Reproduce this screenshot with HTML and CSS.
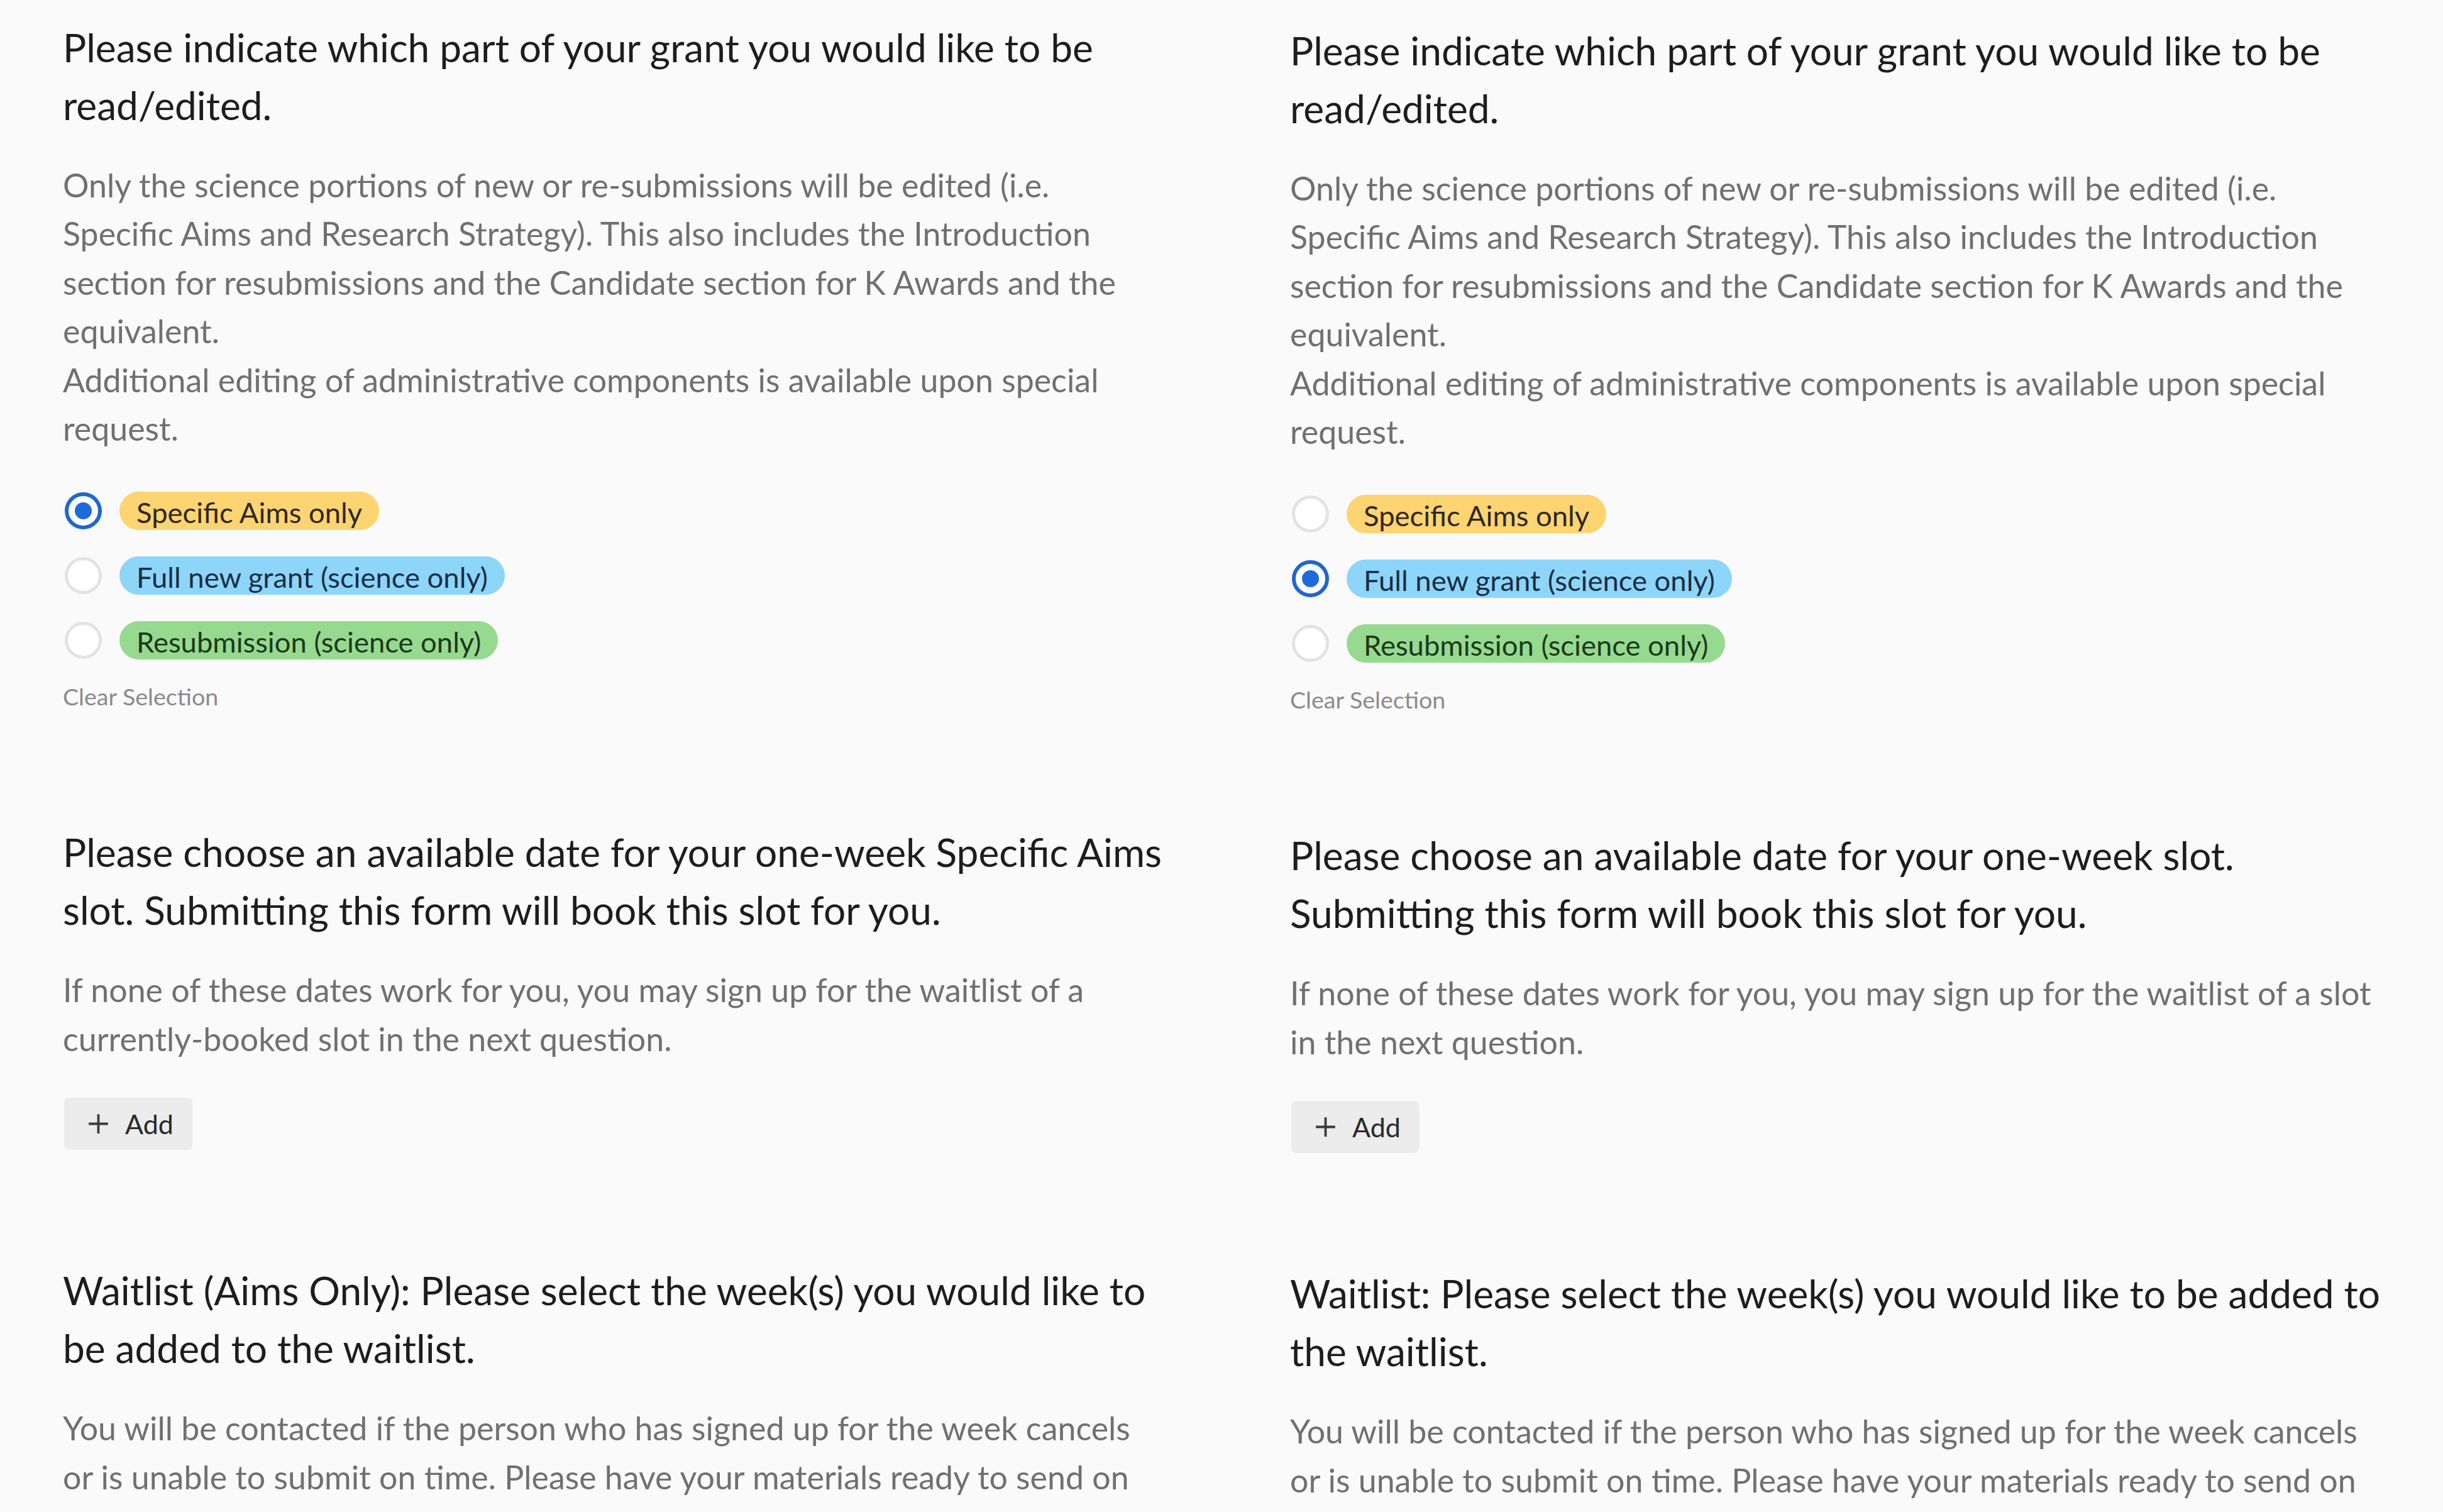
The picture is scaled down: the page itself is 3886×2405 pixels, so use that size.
FILE: index.html
```html
<!DOCTYPE html>
<html lang="en">
<head>
<meta charset="utf-8">
<title>Grant editing form</title>
<link rel="stylesheet" href="styles.css">
</head>
<body>
<main class="page">
  <section class="form-col">
    <div class="question">
      <h2 class="q-title">Please indicate which part of your grant you would like to be read/edited.</h2>
      <p class="q-desc">Only the science portions of new or re-submissions will be edited (i.e. Specific Aims and Research Strategy). This also includes the Introduction section for resubmissions and the Candidate section for K Awards and the equivalent.<br>Additional editing of administrative components is available upon special request.</p>
      <div class="options">
        <div class="option"><span class="radio radio--checked"></span><span class="tag tag--yellow">Specific Aims only</span></div>
        <div class="option"><span class="radio"></span><span class="tag tag--blue">Full new grant (science only)</span></div>
        <div class="option"><span class="radio"></span><span class="tag tag--green">Resubmission (science only)</span></div>
      </div>
      <div class="clear">Clear Selection</div>
    </div>
    <div class="question">
      <h2 class="q-title">Please choose an available date for your one-week Specific Aims slot. Submitting this form will book this slot for you.</h2>
      <p class="q-desc">If none of these dates work for you, you may sign up for the waitlist of a currently-booked slot in the next question.</p>
      <div class="add-btn"><svg class="add-icon" viewBox="0 0 24 24" aria-hidden="true"><path d="M12 3v18M3 12h18"/></svg><span>Add</span></div>
    </div>
    <div class="question">
      <h2 class="q-title">Waitlist (Aims Only): Please select the week(s) you would like to be added to the waitlist.</h2>
      <p class="q-desc">You will be contacted if the person who has signed up for the week cancels or is unable to submit on time. Please have your materials ready to send on</p>
    </div>
  </section>

  <section class="form-col form-col--right">
    <div class="question">
      <h2 class="q-title">Please indicate which part of your grant you would like to be read/edited.</h2>
      <p class="q-desc">Only the science portions of new or re-submissions will be edited (i.e. Specific Aims and Research Strategy). This also includes the Introduction section for resubmissions and the Candidate section for K Awards and the equivalent.<br>Additional editing of administrative components is available upon special request.</p>
      <div class="options">
        <div class="option"><span class="radio"></span><span class="tag tag--yellow">Specific Aims only</span></div>
        <div class="option"><span class="radio radio--checked"></span><span class="tag tag--blue">Full new grant (science only)</span></div>
        <div class="option"><span class="radio"></span><span class="tag tag--green">Resubmission (science only)</span></div>
      </div>
      <div class="clear">Clear Selection</div>
    </div>
    <div class="question">
      <h2 class="q-title">Please choose an available date for your one-week slot. Submitting this form will book this slot for you.</h2>
      <p class="q-desc">If none of these dates work for you, you may sign up for the waitlist of a slot in the next question.</p>
      <div class="add-btn"><svg class="add-icon" viewBox="0 0 24 24" aria-hidden="true"><path d="M12 3v18M3 12h18"/></svg><span>Add</span></div>
    </div>
    <div class="question">
      <h2 class="q-title">Waitlist: Please select the week(s) you would like to be added to the waitlist.</h2>
      <p class="q-desc">You will be contacted if the person who has signed up for the week cancels or is unable to submit on time. Please have your materials ready to send on</p>
    </div>
  </section>
</main>
</body>
</html>
```
FILE: styles.css
```css
html, body {
  margin: 0;
  background: #fafafa;
}

body {
  font-family: Lato, "Noto Sans", sans-serif;
  color: #202020;
}

.page {
  display: flex;
  align-items: flex-start;
  gap: 172px;
  padding: 29px 0 0 100px;
}

.form-col {
  flex: none;
  width: 1780px;
}

.form-col--right {
  margin-top: 5px;
}

.question {
  margin-bottom: 177px;
}

.question:last-child {
  margin-bottom: 0;
}

.q-title {
  margin: 0;
  font-size: 62.2px;
  font-weight: 400;
  line-height: 92px;
  color: #1d1d1d;
}

.q-desc {
  margin: 43px 0 0;
  max-width: 1748px;
  font-size: 51.9px;
  line-height: 77.4px;
  color: #707070;
}

.options {
  margin-top: 41px;
}

.option {
  display: flex;
  align-items: center;
  gap: 28px;
  height: 103px;
  padding-left: 3px;
}

.radio {
  box-sizing: border-box;
  flex: none;
  width: 59px;
  height: 59px;
  border-radius: 50%;
  border: 5px solid #e3e3e3;
  background: #ffffff;
  display: grid;
  place-items: center;
}

.radio--checked {
  border: 6px solid #2166cf;
}

.radio--checked::after {
  content: "";
  width: 27px;
  height: 27px;
  border-radius: 50%;
  background: #1f6ad8;
}

.tag {
  box-sizing: border-box;
  height: 61px;
  padding: 4px 27px 0 27px;
  border-radius: 31px;
  font-size: 45.4px;
  line-height: 57px;
  white-space: nowrap;
}

.tag--yellow {
  background: #fdd472;
  color: #2e2718;
}

.tag--blue {
  background: #8dd5f9;
  color: #182d42;
}

.tag--green {
  background: #96da8f;
  color: #1c381c;
}

.clear {
  margin-top: 14px;
  font-size: 37.6px;
  line-height: 48px;
  color: #8b8b8b;
}

.add-btn {
  margin: 55px 0 0 2px;
  box-sizing: border-box;
  display: inline-flex;
  align-items: center;
  gap: 22px;
  height: 83px;
  padding: 0 30px 0 34px;
  background: #ececec;
  border-radius: 8px;
  font-size: 43px;
  color: #2a2a2a;
}

.add-icon {
  width: 41px;
  height: 41px;
  flex: none;
  fill: none;
  stroke: #3c3c3c;
  stroke-width: 2.2;
}
```
